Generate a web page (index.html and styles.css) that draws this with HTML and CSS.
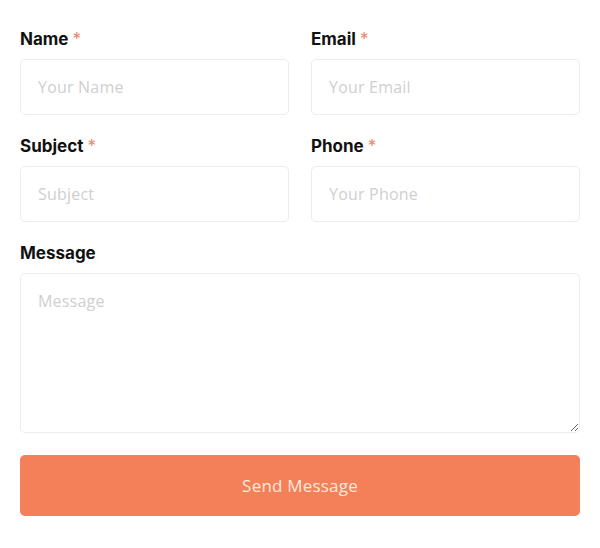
FILE: index.html
```html
<!DOCTYPE html>
<html lang="en">
<head>
    <meta charset="UTF-8">
    <meta name="viewport" content="width=device-width, initial-scale=1.0">
    <title>Contact Form</title>
    <link rel="stylesheet" href="styles.css">
</head>
<body>
    <form class="contact-form">
        <div class="field">
            <label for="name">Name <span class="req">*</span></label>
            <input id="name" type="text" placeholder="Your Name">
        </div>
        <div class="field">
            <label for="email">Email <span class="req">*</span></label>
            <input id="email" type="email" placeholder="Your Email">
        </div>
        <div class="field">
            <label for="subject">Subject <span class="req">*</span></label>
            <input id="subject" type="text" placeholder="Subject">
        </div>
        <div class="field">
            <label for="phone">Phone <span class="req">*</span></label>
            <input id="phone" type="tel" placeholder="Your Phone">
        </div>
        <div class="field full">
            <label for="message">Message</label>
            <textarea id="message" placeholder="Message"></textarea>
        </div>
        <button type="button" class="send-btn full">Send Message</button>
    </form>
</body>
</html>
```

FILE: styles.css
```css
:root {
    --accent: #f4805a;
    --text-color: #111;
    --border: #ececec;
    --placeholder: #cfcfcf;
}

body {
    margin: 0;
    padding: 27px 20px 20px;
    background: #fff;
    font-family: Inter, "Noto Sans", Arial, sans-serif;
    color: var(--text-color);
}

.contact-form {
    display: grid;
    grid-template-columns: 1fr 1fr;
    column-gap: 22px;
    row-gap: 19px;
}

.field {
    display: flex;
    flex-direction: column;
}

.full {
    grid-column: 1 / -1;
}

label {
    font-size: 17px;
    font-weight: 700;
    line-height: 24px;
    margin-bottom: 8px;
}

.req {
    color: #e8876a;
    font-weight: 400;
}

input,
textarea {
    box-sizing: border-box;
    width: 100%;
    border: 1px solid var(--border);
    border-radius: 5px;
    padding: 0 17px;
    font-family: "Open Sans", Arial, sans-serif;
    font-size: 16px;
    letter-spacing: 0.2px;
    color: #333;
    background: #fff;
    outline: none;
}

input {
    height: 56px;
}

textarea {
    height: 160px;
    padding-top: 16px;
    resize: vertical;
}

input::placeholder,
textarea::placeholder {
    color: var(--placeholder);
}

.send-btn {
    margin-top: 3px;
    height: 61px;
    border: none;
    border-radius: 5px;
    background: var(--accent);
    color: #fde9dc;
    font-family: "Open Sans", Arial, sans-serif;
    font-size: 17px;
    letter-spacing: 0.2px;
    cursor: pointer;
}
```
